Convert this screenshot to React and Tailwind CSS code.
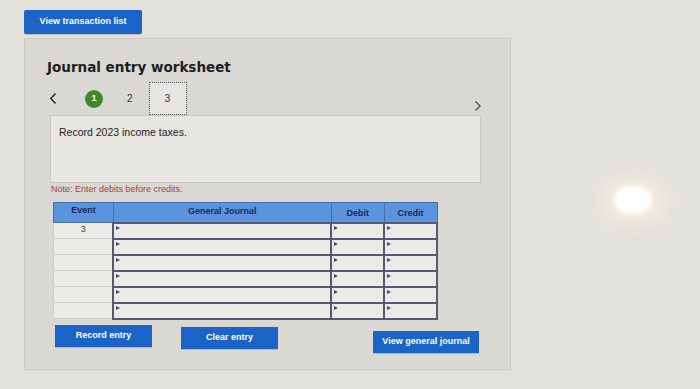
import React from 'react';

const rows = ['3', '', '', '', '', ''];

function Marker() {
  return (
    <span className="absolute left-[2px] top-[2px] h-0 w-0 border-y-[2px] border-l-[4px] border-y-transparent border-l-[#3a4a7a]" />
  );
}

function BlueButton({ children, className = '' }) {
  return (
    <button
      type="button"
      className={`flex items-center justify-center bg-[#1b63c6] text-[9px] font-bold text-white shadow-[0_1px_0_rgba(0,0,0,0.15)] ${className}`}
    >
      {children}
    </button>
  );
}

export default function App() {
  return (
    <div
      className="relative h-[389px] w-[700px] overflow-hidden bg-[#e2e1dc]"
      style={{ fontFamily: '"Liberation Sans", Arial, sans-serif' }}
    >
      <div className="px-[24px] pt-[10px]">
        <BlueButton className="h-[24px] w-[118px] rounded-[2px]">View transaction list</BlueButton>

        {/* worksheet panel */}
        <div className="mt-[4px] flex h-[332px] w-[487px] flex-col border border-[#cbcac5] bg-[#d9d8d3] pl-[22px] pr-[8px]">
          <h1
            className="mt-[19px] text-[13.5px] font-bold leading-[18px] text-[#1f1f1f]"
            style={{ fontFamily: '"DejaVu Sans", Verdana, sans-serif' }}
          >
            Journal entry worksheet
          </h1>

          <div className="relative mt-[6px] flex h-[33px] items-center">
            <svg width="8" height="13" viewBox="0 0 8 13" className="ml-[2px]">
              <path d="M6.5 1.5 L1.8 6.5 L6.5 11.5" fill="none" stroke="#333" strokeWidth="1.6" />
            </svg>
            <span className="ml-[28px] flex h-[18px] w-[18px] items-center justify-center rounded-full bg-[#3f8a2c] text-[9px] font-bold text-white">
              1
            </span>
            <span className="ml-[24px] text-[10px] text-[#333]">2</span>
            <span className="ml-[16px] flex h-[33px] w-[38px] items-center justify-center border border-dotted border-[#555] bg-[#e6e5e1] text-[10px] text-[#333]">
              3
            </span>
            <svg width="8" height="12" viewBox="0 0 8 12" className="ml-auto mr-[20px] mt-[14px]">
              <path d="M1.5 1.5 L6 6 L1.5 10.5" fill="none" stroke="#555" strokeWidth="1.4" />
            </svg>
          </div>

          <div className="ml-[3px] h-[68px] w-[431px] border border-[#c8c7c2] bg-[#e7e6e1] px-[8px] pt-[9px] text-[10.5px] text-[#222]">
            Record 2023 income taxes.
          </div>

          <p className="ml-[4px] mt-0 text-[9px] leading-[12px] text-[#a8443a]">
            Note: Enter debits before credits.
          </p>

          <table className="ml-[6px] mt-[7px] w-[385px] border-collapse text-[9px]">
            <thead>
              <tr className="h-[20px] bg-[#5b93dc] font-bold text-[#1d2b55]">
                <th className="w-[60px] border border-[#4a6fa8] align-top pt-[1px] font-bold">Event</th>
                <th className="w-[219px] border border-[#4a6fa8] align-top pt-[2px] font-bold">General Journal</th>
                <th className="w-[53px] border border-[#4a6fa8] pt-[3px] font-bold">Debit</th>
                <th className="w-[53px] border border-[#4a6fa8] pt-[3px] font-bold">Credit</th>
              </tr>
            </thead>
            <tbody>
              {rows.map((ev, i) => (
                <tr key={i} className="h-[16px]">
                  <td className="border border-[#cfcecb] bg-[#ecebe7] text-center align-top text-[9px] text-[#444]">{ev}</td>
                  <td className="relative border-2 border-[#525a76] bg-[#ebeae6]"><Marker /></td>
                  <td className="relative border-2 border-[#525a76] bg-[#ebeae6]"><Marker /></td>
                  <td className="relative border-2 border-[#525a76] bg-[#ebeae6]"><Marker /></td>
                </tr>
              ))}
            </tbody>
          </table>

          <div className="ml-[8px] mt-[5px] flex items-start">
            <BlueButton className="h-[22px] w-[97px]">Record entry</BlueButton>
            <BlueButton className="ml-[29px] mt-[2px] h-[22px] w-[97px]">Clear entry</BlueButton>
            <BlueButton className="ml-[95px] mt-[6px] h-[22px] w-[106px]">View general journal</BlueButton>
          </div>
        </div>
      </div>

      {/* glare from the photo */}
      <div className="pointer-events-none absolute left-[600px] top-[176px] h-[50px] w-[68px] rounded-full bg-[#fff4dc] opacity-50 blur-[8px]" />
      <div className="pointer-events-none absolute left-[614px] top-[186px] h-[28px] w-[38px] rounded-full bg-white blur-[2px]" />
    </div>
  );
}
